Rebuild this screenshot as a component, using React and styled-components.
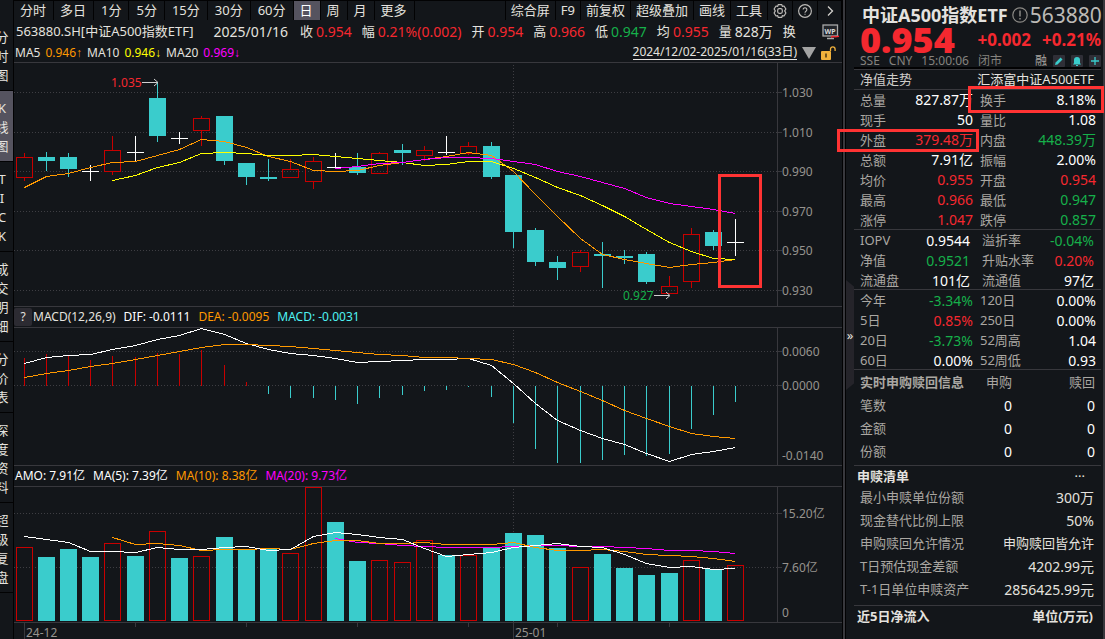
import React from 'react';
import styled, { createGlobalStyle, css } from 'styled-components';

const c = {
  bg: '#13161a',
  line: '#38383d',
  black: '#020203',
  text: '#e4e2df',
  label: '#aaa7a2',
  axis: '#96938e',
  red: '#f5282f',
  green: '#16b04a',
  white: '#ffffff',
  cyan: '#3acccc',
  hollow: '#c80000',
  orange: '#ff9900',
  yellow: '#ffff00',
  magenta: '#ff00ff',
  aqua: '#4ff3f3',
  mark: '#ff3333',
  active: '#55535f',
};

const Global = createGlobalStyle`
  * { box-sizing: border-box; }
  html, body { margin: 0; background: ${c.bg}; }
  body {
    font-family: "Noto Sans", "Noto Sans CJK SC", sans-serif;
    font-size: 14px;
    color: ${c.text};
    overflow: hidden;
  }
  button { font: inherit; color: inherit; background: none; border: 0; padding: 0; margin: 0; }
  dl, dd, dt, h1, h2, p { margin: 0; font-size: inherit; font-weight: inherit; }
`;

const Page = styled.div`
  display: flex;
  min-height: 100vh;
  background: ${c.bg};
`;

/* ---------- left rail ---------- */
const Rail = styled.nav`
  width: 14px;
  flex: none;
  overflow: hidden;
  display: flex;
  flex-direction: column;
  align-items: flex-end;
  padding-top: 20px;
  border-right: 1px solid ${c.black};
`;
const RailItem = styled.button`
  width: 22px;
  flex: none;
  display: flex;
  flex-direction: column;
  align-items: center;
  padding: 8px 0 5px;
  border-bottom: 1px solid ${c.black};
  font-size: 13px;
  line-height: 19px;
  background: ${(p) => (p.$active ? c.active : 'transparent')};
`;

/* ---------- centre ---------- */
const Main = styled.main`
  flex: 1;
  min-width: 0;
  display: flex;
  flex-direction: column;
`;
const Toolbar = styled.div`
  display: flex;
  justify-content: space-between;
  height: 20px;
  border-top: 1px solid ${c.black};
`;
const Group = styled.div`
  display: flex;
  border-left: ${(p) => (p.$edge ? `1px solid ${c.black}` : '0')};
`;
const toolPad = { tight: '0 5px', digits: '0 7px', normal: '0 7px 0 6px' };
const Tool = styled.button`
  display: flex;
  align-items: center;
  justify-content: center;
  padding: ${(p) => toolPad[p.$pad || 'normal']};
  border-right: 1px solid ${c.black};
  font-size: 13px;
  line-height: 19px;
  white-space: nowrap;
  background: ${(p) => (p.$active ? c.active : 'transparent')};
  color: ${(p) => (p.$active ? c.white : c.text)};
`;
const QuoteLine = styled.div`
  display: flex;
  align-items: center;
  height: 23px;
  padding: 0 2px;
`;
const QuoteItems = styled.dl`
  flex: 1;
  min-width: 0;
  display: flex;
  gap: 10px;
  white-space: nowrap;
  line-height: 23px;
`;
const QuoteName = styled.h1`
  font-size: 13px;
  margin-right: 10px;
`;
const QuoteDate = styled.dd`
  padding-right: 2px;
`;
const Pair = styled.div`
  display: flex;
  gap: 3px;
  dt { font-size: 13px; }
  dd { color: ${(p) => p.$color}; }
`;
const Legend = styled.div`
  display: flex;
  align-items: center;
  gap: 5px;
  height: 20px;
  padding-left: ${(p) => (p.$flush ? 0 : 1)}px;
  padding-right: 5px;
  font-size: 12px;
  line-height: 20px;
  white-space: nowrap;
  border-bottom: 1px solid ${c.line};
  ${(p) => p.$tall && css`
    height: 22px;
    gap: 8px;
    border-top: 1px solid ${c.line};
  `}
`;
const Average = styled.span`
  display: flex;
  gap: 5px;
  b { font-weight: 400; color: ${(p) => p.$color}; }
  i { font-style: normal; font-family: "Liberation Sans", sans-serif; }
`;
const Tinted = styled.span`
  color: ${(p) => p.$color};
`;
const RangeLink = styled.a`
  margin-left: auto;
  line-height: 14px;
  color: ${c.text};
  text-decoration: none;
  border-bottom: 1px solid ${c.text};
`;
const Help = styled.button`
  width: 18px;
  height: 18px;
  border-radius: 2px;
  background: #2c2b32;
  line-height: 18px;
  font-size: 12px;
  margin-right: -7px;
`;
const ChartRow = styled.div`
  display: flex;
  height: ${(p) => p.$height}px;
`;
const Plot = styled.svg`
  flex: 1;
  min-width: 0;
  height: 100%;
  display: block;
`;
const Axis = styled.svg`
  flex: none;
  width: 65px;
  height: 100%;
  display: block;
`;
const TimeRow = styled(ChartRow)`
  border-top: 1px solid ${c.line};
`;

/* ---------- divider ---------- */
const Divider = styled.div`
  flex: none;
  width: 12px;
  display: flex;
  align-items: flex-start;
  border-left: 1px solid ${c.black};
  box-shadow: inset 2px 0 0 ${c.line}, inset 3px 0 0 ${c.black};
`;
const Collapse = styled.button`
  margin: 280px 0 0 3px;
  width: 8px;
  height: 110px;
  color: ${c.text};
  background: #25242a;
  clip-path: polygon(0 0, 100% 6%, 100% 94%, 0 100%);
  font-size: 13px;
`;

/* ---------- right panel ---------- */
const Panel = styled.aside`
  flex: none;
  width: 251px;
  border-right: 2px solid ${c.line};
  padding-right: 2px;
`;
const Head = styled.header`
  height: 70px;
  padding: 3px 0 0 6px;
  border-bottom: 1px solid ${c.line};
  box-shadow: inset 0 -2px 0 ${c.black};
`;
const TitleRow = styled.div`
  display: flex;
  align-items: center;
  height: 24px;
  gap: 4px;
  padding-left: 2px;
  white-space: nowrap;
  h2 { font-size: 18px; font-weight: 700; line-height: 24px; }
  span { font-size: 21px; line-height: 24px; color: #bcbab6; margin-left: -2px; }
  svg { flex: none; }
`;
const PriceRow = styled.div`
  display: flex;
  align-items: center;
  height: 26px;
  color: ${c.red};
  font-weight: 700;
  white-space: nowrap;
  strong { font-size: 36px; line-height: 26px; flex: 1; }
  span { font-size: 17px; line-height: 26px; margin-left: 11px; }
`;
const StatusRow = styled.div`
  display: flex;
  align-items: center;
  gap: 9px;
  height: 16px;
  font-size: 12px;
  line-height: 16px;
  color: #85827e;
`;
const Actions = styled.div`
  display: flex;
  align-items: center;
  gap: 6px;
  margin-left: auto;
  color: ${c.label};
`;
const Action = styled.button`
  display: flex;
  width: 12px;
  height: 12px;
  border-radius: 1px;
  background: #2f2f37;
`;
const TrendRow = styled.div`
  display: flex;
  justify-content: space-between;
  height: 20px;
  padding: 0 7px 0 6px;
  font-size: 13px;
  line-height: 19px;
  border-bottom: 1px solid ${c.line};
`;
const Stats = styled.dl`
  display: grid;
  grid-template-columns: 113fr 116fr;
  grid-auto-rows: 20px;
  column-gap: 7px;
  padding: 0 5px 0 6px;
  line-height: ${(p) => (p.$low ? 21 : 20)}px;
  box-shadow: inset 0 -1px 0 ${c.line};
  ${(p) => p.$inset && css`
    grid-template-columns: 110fr 112fr;
    column-gap: 12px;
    padding-right: 7px;
  `}
`;
const Cell = styled.div`
  position: relative;
  display: flex;
  justify-content: space-between;
  white-space: nowrap;
  dt { font-size: 13px; color: ${c.label}; }
  dd { color: ${(p) => p.$color}; }
  ${(p) => p.$mark && css`
    &::after {
      content: '';
      position: absolute;
      z-index: 2;
      inset: ${p.$mark};
      border: 3px solid ${c.mark};
    }
  `}
`;
const Table = styled.table`
  width: 100%;
  border-collapse: collapse;
  table-layout: fixed;
  font-size: 14px;
  line-height: 23px;
  th, td { padding: 0; text-align: right; font-weight: 400; }
  th { font-size: 13px; color: ${c.label}; }
  th:first-child { text-align: left; padding-left: 6px; }
  thead th { height: 24px; white-space: nowrap; }
  thead th:first-child { font-weight: 700; width: 45%; }
  thead th:nth-child(2) { width: 19%; }
  tbody td { color: ${c.white}; }
  th:last-child, td:last-child { padding-right: 6px; }
`;
const Block = styled.section`
  padding-bottom: ${(p) => p.$pad}px;
  border-bottom: 1px solid ${c.line};
`;
const BlockTitle = styled.div`
  display: flex;
  justify-content: space-between;
  padding: 0 ${(p) => (p.$wide ? 8 : 16)}px 0 3px;
  font-size: 13px;
  line-height: 20px;
  color: ${c.text};
  h2 { font-weight: 700; }
`;
const ListRow = styled.div`
  display: flex;
  justify-content: space-between;
  padding: 0 7px 0 6px;
  line-height: 23px;
  white-space: nowrap;
  dt { font-size: 13px; color: ${c.label}; }
  dd { font-size: ${(p) => (p.$words ? 13 : 14)}px; }
`;

/* ---------- data ---------- */
const slot = (i) => Math.floor(24.02 + 22.242 * i);

// [kind, body top, body bottom, high, low]; r rising, f falling, d doji
const candles = [
  ['r', 157, 177, 153, 181], ['f', 157, 161, 152, 171], ['f', 157, 169, 153, 177], ['d', 171, 171, 165, 181],
  ['r', 150, 171, 136, 175], ['d', 152, 152, 136, 161], ['f', 98, 136, 82, 142], ['d', 138, 138, 132, 144],
  ['r', 118, 130, 116, 146], ['f', 116, 161, 116, 165], ['f', 163, 177, 163, 185], ['f', 177, 179, 159, 181],
  ['r', 169, 177, 159, 177], ['r', 161, 181, 157, 189], ['d', 167, 167, 153, 167], ['f', 167, 173, 153, 175],
  ['r', 153, 173, 152, 173], ['f', 150, 153, 144, 165], ['r', 150, 155, 146, 161], ['d', 152, 152, 136, 155],
  ['r', 146, 153, 142, 155], ['f', 146, 177, 142, 179], ['f', 175, 232, 175, 248], ['f', 230, 262, 228, 266],
  ['f', 262, 268, 256, 280], ['r', 252, 266, 250, 272], ['f', 254, 256, 242, 288], ['f', 256, 258, 250, 264],
  ['f', 254, 282, 252, 284], ['r', 286, 293, 276, 293], ['r', 234, 281, 228, 288], ['f', 232, 246, 230, 250],
  ['d', 242, 242, 219, 256],
];
const ma5 = [187, 176, 173, 167, 162, 161, 155, 149, 139, 141, 147, 156, 161, 170, 171, 170, 165, 162, 159, 156, 152, 155, 171, 194, 216, 238, 254, 259, 263, 267, 264, 262, 259];
const ma10 = [180, 175, 167, 162, 153, 152, 153, 155, 155, 154, 156, 158, 160, 162, 165, 164, 161, 161, 168, 177, 187, 195, 205, 216, 229, 242, 251, 258, 259];
const ma20 = [168, 166, 163, 162, 159, 157, 157, 158, 161, 164, 171, 176, 182, 188, 197, 203, 206, 209, 213];
const dif = [363, 357, 355, 354, 349, 345, 339, 335, 328, 334, 343, 349, 353, 355, 358, 362, 361, 360, 359, 359, 358, 365, 383, 403, 420, 430, 438, 444, 453, 461, 454, 451, 447];
const dea = [377, 373, 370, 366, 363, 359, 355, 351, 347, 344, 344, 345, 346, 348, 350, 352, 354, 355, 357, 357, 358, 359, 364, 372, 382, 391, 400, 410, 418, 426, 433, 436, 438];
const hist = [358, 354, 356, 360, 356, 357, 353, 354, 350, 365, 382, 394, 398, 398, 400, 404, 398, 395, 391, 390, 387, 397, 423, 449, 463, 463, 460, 455, 456, 454, 429, 415, 402];
const volume = [
  ['r', 547], ['f', 557], ['f', 549], ['f', 557], ['r', 543], ['f', 556], ['r', 531], ['f', 558], ['r', 556], ['f', 537], ['f', 549],
  ['f', 549], ['r', 553], ['r', 487], ['f', 522], ['f', 561], ['r', 560], ['r', 562], ['r', 540], ['f', 555], ['r', 555], ['f', 547],
  ['f', 533], ['f', 535], ['f', 548], ['r', 567], ['f', 554], ['f', 568], ['f', 575], ['f', 573], ['r', 560], ['f', 569], ['r', 565],
];
const vol5 = [536, 539, 542, 551, 551, 552, 547, 549, 549, 547, 546, 550, 549, 536, 532, 534, 537, 539, 548, 556, 554, 552, 547, 545, 543, 546, 547, 554, 563, 567, 566, 569, 568];
const vol10 = [537, 544, 543, 545, 550, 549, 549, 548, 549, 543, 540, 540, 543, 543, 542, 544, 544, 544, 542, 547, 550, 550, 549, 551, 554, 555, 556, 558, 561];
const vol20 = [538, 542, 543, 545, 546, 547, 547, 547, 546, 545, 545, 546, 546, 547, 548, 550, 550, 551, 553];

/* ---------- chart parts ---------- */
const Line = ({ data, from = 0, color }) => (
  <polyline
    points={data.map((y, i) => `${slot(i + from) + 0.5},${y + 0.5}`).join(' ')}
    fill="none" stroke={color} shapeRendering="crispEdges"
  />
);
const Grid = ({ ys, top, bottom }) => (
  <g stroke="#3e3e43" strokeDasharray="1 2" shapeRendering="crispEdges">
    {ys.map((y) => <line key={y} x1="14" x2="777" y1={y + 0.5} y2={y + 0.5} />)}
    <line x1="513.5" x2="513.5" y1={top} y2={bottom} />
  </g>
);
const Bar = ({ kind, i, top, bottom }) =>
  kind === 'f' ? (
    <rect x={slot(i) - 8} y={top} width="17" height={bottom - top} fill={c.cyan} />
  ) : (
    <rect x={slot(i) - 7.5} y={top + 0.5} width="16" height={Math.max(bottom - top - 1, 1)} fill="none" stroke={c.hollow} />
  );
const Candle = ({ d: [kind, top, bottom, high, low], i }) => {
  const x = slot(i) + 0.5;
  if (kind === 'd') {
    return <path d={`M${x - 8.5} ${top + 0.5}h17M${x} ${high}V${low}`} stroke={c.white} fill="none" />;
  }
  return (
    <g>
      <path d={kind === 'f' ? `M${x} ${high}V${low}` : `M${x} ${high}V${top}M${x} ${bottom}V${low}`} stroke={kind === 'f' ? c.cyan : c.hollow} />
      <Bar kind={kind} i={i} top={top} bottom={kind === 'r' ? bottom + 1 : bottom} />
    </g>
  );
};
const Scale = ({ top, height, marks }) => (
  <Axis viewBox={`777 ${top} 65 ${height}`}>
    <path d={`M777.5 ${top}V${top + height}`} stroke={c.line} />
    {marks.map(([label, y, tick]) => (
      <g key={label}>
        {tick ? <path d={`M778 ${y + 0.5}h4`} stroke={c.line} /> : null}
        <text x="782" y={y + 5} fontSize="12" fill={c.axis}>{label}</text>
      </g>
    ))}
  </Axis>
);

const left = ['分时', '多日', '1分', '5分', '15分', '30分', '60分', '日', '周', '月', '更多'];
const right = ['综合屏', 'F9', '前复权', '超级叠加', '画线', '工具'];
const rail = ['分时图', 'K线图', 'TICK', '成交明细', '分价表', '深度资料', '超级复盘'];
const quote = [
  ['收', '0.954', c.red], ['幅', '0.21%(0.002)', c.red], ['开', '0.954', c.red], ['高', '0.966', c.red],
  ['低', '0.947', c.green], ['均', '0.955', c.red], ['量', '828万', c.text], ['换', '', c.text],
];
const averages = [
  ['MA5', '0.946', '↑', c.orange], ['MA10', '0.946', '↓', c.yellow], ['MA20', '0.969', '↓', c.magenta],
];
const stats1 = [
  ['总量', '827.87万', c.white], ['换手', '8.18%', c.white, '-4px -8px -3px -12px'],
  ['现手', '50', c.white], ['量比', '1.08', c.white],
  ['外盘', '379.48万', c.red, '-1px -6px -2px -23px'], ['内盘', '448.39万', c.green],
  ['总额', '7.91亿', c.white], ['振幅', '2.00%', c.white],
  ['均价', '0.955', c.red], ['开盘', '0.954', c.red],
  ['最高', '0.966', c.red], ['最低', '0.947', c.green],
  ['涨停', '1.047', c.red], ['跌停', '0.857', c.green],
];
const stats2 = [
  ['IOPV', '0.9544', c.white], ['溢折率', '-0.04%', c.green],
  ['净值', '0.9521', c.green], ['升贴水率', '0.20%', c.red],
  ['流通盘', '101亿', c.white], ['流通值', '97亿', c.white],
];
const stats3 = [
  ['今年', '-3.34%', c.green], ['120日', '0.00%', c.white],
  ['5日', '0.85%', c.red], ['250日', '0.00%', c.white],
  ['20日', '-3.73%', c.green], ['52周高', '1.04', c.white],
  ['60日', '0.00%', c.white], ['52周低', '0.93', c.white],
];
const list = [
  ['最小申赎单位份额', '300万'], ['现金替代比例上限', '50%'], ['申购赎回允许情况', '申购赎回皆允许', true],
  ['T日预估现金差额', '4202.99元'], ['T-1日单位申赎资产', '2856425.99元'],
];

const StatGroup = ({ rows, inset, low }) => (
  <Stats $inset={inset} $low={low}>
    {rows.map(([k, v, color, mark]) => (
      <Cell key={k} $color={color} $mark={mark}><dt>{k}</dt><dd>{v}</dd></Cell>
    ))}
  </Stats>
);

const Gear = () => (
  <svg width="14" height="14" viewBox="0 0 14 14" fill="none" stroke="#bdbbb8" strokeWidth="1.2">
    <path d="M5.2 .7h3.600l.5 1.700 1.700-.4 1.900 3-1.200 1.900L12.900 9 11 12l-1.700-.4-.5 1.700H5.200l-.5-1.700L3 12 1.100 9l1.200-2.100L1.100 5 3 2l1.700.4z" strokeLinejoin="round" />
    <rect x="4.700" y="4.700" width="4.600" height="4.600" rx="1.500" />
  </svg>
);
const Question = () => (
  <svg width="14" height="14" viewBox="0 0 16 16" fill="none" stroke="#bdbbb8" strokeWidth="1.300">
    <circle cx="8" cy="8" r="7.300" />
    <path d="M5.900 6.400a2.100 2.100 0 1 1 3.200 1.800C8.300 8.700 8 9 8 9.900M8 11v1.300" />
  </svg>
);
const Chevron = () => (
  <svg width="13" height="14" viewBox="0 0 13 14" fill="none" stroke="#d2d0cc" strokeWidth="1.300">
    <path d="M5 2.500 9.500 7 5 11.500" />
  </svg>
);
const Monitor = () => (
  <svg width="18" height="16" viewBox="0 0 18 16">
    <rect x="1" y="1" width="14.500" height="11" fill="#22252a" stroke="#a9a9a9" strokeWidth="1.300" />
    <path d="M5 14.500h7" stroke="#a9a9a9" strokeWidth="1.500" />
    <text x="2.500" y="9.500" fontSize="7" fontWeight="700" fill="#d8d8d8">WP</text>
    <path d="M9 13.300l2-1 2 .6 4-.7" stroke={c.red} fill="none" strokeWidth="1.400" />
  </svg>
);
const Lock = () => (
  <svg width="16" height="14" viewBox="0 0 16 14">
    <rect x="0" y="5" width="10" height="9" rx="1" fill="#f2b23c" />
    <path d="M9.500 5V3.200a2.300 2.300 0 0 1 4.600 0V5" fill="none" stroke="#f2b23c" strokeWidth="1.300" />
    <path d="M5 7.500v4" stroke="#4a3510" strokeWidth="1.500" />
  </svg>
);
const Triangle = () => (
  <svg width="14" height="12" viewBox="0 0 14 12"><path d="M0 0h14L7 12z" fill="#a3a3a3" /></svg>
);
const Info = () => (
  <svg width="16" height="16" viewBox="0 0 16 16" fill="none" stroke="#8b8985" strokeWidth="1.200">
    <circle cx="8" cy="8" r="7.200" /><path d="M8 3.500v6M8 11v1.500" strokeWidth="1.500" />
  </svg>
);

export default function App() {
  return (
    <Page>
      <Global />
      <Rail>
        {rail.map((r, i) => (
          <RailItem key={r} $active={i === 1}>
            {[...r].map((ch, k) => <span key={k}>{ch}</span>)}
          </RailItem>
        ))}
      </Rail>

      <Main>
        <Toolbar>
          <Group>
            {left.map((t) => (
              <Tool key={t} $active={t === '日'} $pad={/\d/.test(t) ? 'digits' : 'normal'}>{t}</Tool>
            ))}
          </Group>
          <Group $edge>
            {right.map((t) => <Tool key={t} $pad="tight">{t}</Tool>)}
            <Tool $pad="tight" aria-label="设置"><Gear /></Tool>
            <Tool $pad="tight" aria-label="帮助"><Question /></Tool>
            <Tool $pad="tight" aria-label="展开"><Chevron /></Tool>
          </Group>
        </Toolbar>

        <QuoteLine>
          <QuoteItems>
            <QuoteName>563880.SH[中证A500指数ETF]</QuoteName>
            <QuoteDate>2025/01/16</QuoteDate>
            {quote.map(([k, v, color]) => (
              <Pair key={k} $color={color}><dt>{k}</dt><dd>{v}</dd></Pair>
            ))}
          </QuoteItems>
          <Monitor />
        </QuoteLine>

        <Legend>
          {averages.map(([name, value, arrow, color]) => (
            <Average key={name} $color={color}><span>{name}</span><b>{value}<i>{arrow}</i></b></Average>
          ))}
          <RangeLink href="#range">2024/12/02-2025/01/16(33日)</RangeLink>
          <Triangle />
          <Lock />
        </Legend>

        <ChartRow $height={243}>
          <Plot viewBox="14 63 763 243" preserveAspectRatio="none">
            <Grid ys={[92, 132, 171, 211, 250, 290]} top={65} bottom={306} />
            <g shapeRendering="crispEdges">
              {candles.map((d, i) => <Candle key={i} d={d} i={i} />)}
            </g>
            <Line data={ma5} color={c.orange} />
            <Line data={ma10} from={4} color={c.yellow} />
            <Line data={ma20} from={14} color={c.magenta} />
            <text x="111" y="87" fontSize="12" fill={c.red}>1.035</text>
            <path d="M142 82.500h15M154 79l4 3.500-4 3.500" stroke="#d0d0d0" fill="none" />
            <text x="623" y="300" fontSize="12" fill={c.green}>0.927</text>
            <path d="M654 295.500h15M666 292l4 3.500-4 3.500" stroke="#d0d0d0" fill="none" />
            <rect x="719.500" y="175.500" width="41" height="111" fill="none" stroke={c.mark} strokeWidth="3" />
          </Plot>
          <Scale top={63} height={243} marks={[['1.030', 92, 1], ['1.010', 132, 1], ['0.990', 171, 1], ['0.970', 211, 1], ['0.950', 250, 1], ['0.930', 290, 1]]} />
        </ChartRow>

        <Legend $tall $flush>
          <Help>?</Help>
          <span>MACD(12,26,9)</span>
          <Tinted $color={c.white}>DIF: -0.0111</Tinted>
          <Tinted $color={c.orange}>DEA: -0.0095</Tinted>
          <Tinted $color={c.aqua}>MACD: -0.0031</Tinted>
        </Legend>
        <ChartRow $height={137}>
          <Plot viewBox="14 328 763 137" preserveAspectRatio="none">
            <Grid ys={[351, 385]} top={330} bottom={463} />
            <g shapeRendering="crispEdges">
              {hist.map((y, i) => (
                <path key={i} d={`M${slot(i) + 0.5} 385.500V${y}`} stroke={y < 385 ? c.hollow : c.cyan} />
              ))}
            </g>
            <Line data={dif} color={c.white} />
            <Line data={dea} color={c.orange} />
          </Plot>
          <Scale top={328} height={137} marks={[['0.0060', 351, 1], ['0.0000', 385, 1], ['-0.0140', 455, 0]]} />
        </ChartRow>

        <Legend $tall>
          <Tinted $color={c.white}>AMO: 7.91亿</Tinted>
          <Tinted $color={c.white}>MA(5): 7.39亿</Tinted>
          <Tinted $color={c.orange}>MA(10): 8.38亿</Tinted>
          <Tinted $color={c.magenta}>MA(20): 9.73亿</Tinted>
        </Legend>
        <ChartRow $height={135}>
          <Plot viewBox="14 487 763 135" preserveAspectRatio="none">
            <Grid ys={[513, 567]} top={489} bottom={622} />
            <g shapeRendering="crispEdges">
              {volume.map(([kind, top], i) => <Bar key={i} kind={kind} i={i} top={top} bottom={621} />)}
            </g>
            <Line data={vol20} from={14} color={c.magenta} />
            <Line data={vol10} from={4} color={c.orange} />
            <Line data={vol5} color={c.white} />
          </Plot>
          <Scale top={487} height={135} marks={[['15.20亿', 513, 1], ['7.60亿', 567, 1], ['0', 612, 0]]} />
        </ChartRow>
        <TimeRow $height={17}>
          <Plot viewBox="14 623 828 16" preserveAspectRatio="none">
            <path d="M24.500 623v16M513.500 623v16M135.500 623v4M246.500 623v4M357.500 623v4M468.500 623v4M557.500 623v4M669.500 623v4" stroke={c.line} />
            <text x="26" y="637" fontSize="12" fill={c.axis}>24-12</text>
            <text x="515" y="637" fontSize="12" fill={c.axis}>25-01</text>
          </Plot>
        </TimeRow>
      </Main>

      <Divider><Collapse aria-label="收起侧栏">»</Collapse></Divider>

      <Panel>
        <Head>
          <TitleRow><h2>中证A500指数ETF</h2><Info /><span>563880</span></TitleRow>
          <PriceRow><strong>0.954</strong><span>+0.002</span><span>+0.21%</span></PriceRow>
          <StatusRow>
            <span>SSE</span><span>CNY</span><span>15:00:06</span><span>闭市</span>
            <Actions>
              <span>融</span>
              <Action aria-label="编辑"><svg width="12" height="12" viewBox="0 0 12 12"><path d="M2 10l.6-2.500 5-5L9.500 4.400l-5 5z" fill={c.cyan} /></svg></Action>
              <Action aria-label="提醒"><svg width="12" height="12" viewBox="0 0 12 12"><path d="M2 9.500h8L9 8V5a3 3 0 0 0-6 0v3zM5 10h2v1H5z" fill={c.cyan} /></svg></Action>
              <Action aria-label="添加"><svg width="12" height="12" viewBox="0 0 12 12"><path d="M6 2v8M2 6h8" stroke={c.cyan} strokeWidth="1.300" /></svg></Action>
            </Actions>
          </StatusRow>
        </Head>
        <TrendRow><Tinted $color="#cfcdc9">净值走势</Tinted><span>汇添富中证A500ETF</span></TrendRow>
        <StatGroup rows={stats1} />
        <StatGroup rows={stats2} inset low />
        <StatGroup rows={stats3} low />
        <Block $pad={2}>
          <Table>
            <thead><tr><th>实时申购赎回信息</th><th>申购</th><th>赎回</th></tr></thead>
            <tbody>
              {['笔数', '金额', '份额'].map((r) => <tr key={r}><th>{r}</th><td>0</td><td>0</td></tr>)}
            </tbody>
          </Table>
        </Block>
        <Block $pad={4}>
          <BlockTitle><h2>申赎清单</h2><span>···</span></BlockTitle>
          <dl>
            {list.map(([k, v, words]) => <ListRow key={k} $words={words}><dt>{k}</dt><dd>{v}</dd></ListRow>)}
          </dl>
        </Block>
        <BlockTitle $wide><h2>近5日净流入</h2><h2>单位(万元)</h2></BlockTitle>
      </Panel>
    </Page>
  );
}
